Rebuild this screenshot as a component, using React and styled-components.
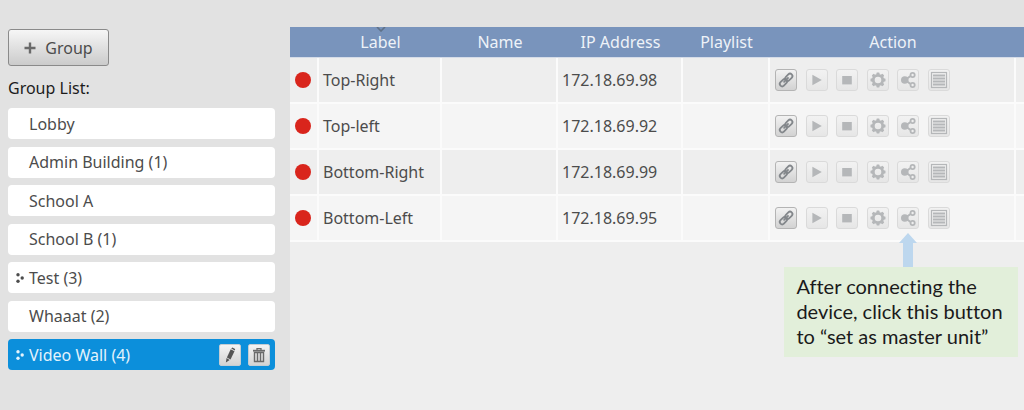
import styled, { createGlobalStyle } from "styled-components";

const groups = [
    { name: "Lobby" },
    { name: "Admin Building (1)" },
    { name: "School A" },
    { name: "School B (1)" },
    { name: "Test (3)", nested: true },
    { name: "Whaaat (2)" },
    { name: "Video Wall (4)", nested: true, selected: true },
];

const devices = [
    { label: "Top-Right", ip: "172.18.69.98" },
    { label: "Top-left", ip: "172.18.69.92" },
    { label: "Bottom-Right", ip: "172.18.69.99" },
    { label: "Bottom-Left", ip: "172.18.69.95", hint: true },
];

function PlusIcon(){
    return(
        <svg width="12" height="12" viewBox="0 0 12 12" aria-hidden="true">
            <path d="M6 .5v11M.5 6h11" stroke="#6a6a6a" strokeWidth="2.4"/>
        </svg>
    );
};

function DotsIcon(){
    return(
        <svg width="9" height="10" viewBox="0 0 9 10" fill="currentColor" aria-hidden="true">
            <circle cx="2" cy="1.8" r="1.7"/>
            <circle cx="6.2" cy="5" r="1.7"/>
            <circle cx="2" cy="8.2" r="1.7"/>
        </svg>
    );
};

function PencilIcon(){
    return(
        <svg width="20" height="20" viewBox="0 0 20 20" fill="#555" aria-hidden="true">
            <path d="M11.2 3.4l1.2-.9 2.7 1.5-.2 1.6z"/>
            <path d="M10.7 4.2l3.8 2.1-4 8.2-3.6-2.1z"/>
            <path d="M6.5 13.1l3.1 1.8-3.7 2.7z"/>
        </svg>
    );
};

function TrashIcon(){
    return(
        <svg width="20" height="20" viewBox="0 0 20 20" fill="none" stroke="#6a6a6a" aria-hidden="true">
            <path d="M4 5.7h12" strokeWidth="1.8"/>
            <path d="M8 5V3.6h4V5" strokeWidth="1.3"/>
            <path d="M5.5 7.5v9h9v-9z" strokeWidth="1.4"/>
            <path d="M8.5 7.5v9M11.5 7.5v9" strokeWidth="1.4"/>
        </svg>
    );
};

function LinkIcon(){
    return(
        <svg width="20" height="20" viewBox="0 0 20 20" fill="none" stroke="#83878b" strokeWidth="1.8" aria-hidden="true">
            <rect x="8.7" y="4.9" width="8.2" height="4.8" rx="2.4" transform="rotate(-45 12.8 7.3)"/>
            <rect x="3.3" y="10.3" width="8.2" height="4.8" rx="2.4" transform="rotate(-45 7.4 12.7)"/>
            <path d="M8.1 11.9l3.9-3.9" strokeLinecap="round"/>
        </svg>
    );
};

function PlayIcon(){
    return(
        <svg width="20" height="20" viewBox="0 0 20 20" fill="#b5b7b9" aria-hidden="true">
            <path d="M5.4 4.8l9.4 5.2-9.4 5.2z"/>
        </svg>
    );
};

function StopIcon(){
    return(
        <svg width="20" height="20" viewBox="0 0 20 20" fill="#b5b7b9" aria-hidden="true">
            <path d="M5.2 6h9.6v8.4H5.2z"/>
        </svg>
    );
};

function GearIcon(){
    const teeth = [0, 45, 90, 135, 180, 225, 270, 315];
    return(
        <svg width="20" height="20" viewBox="0 0 20 20" aria-hidden="true">
            <circle cx="10" cy="10" r="4.7" fill="none" stroke="#b5b7b9" strokeWidth="2.8"/>
            {teeth.map((angle) => (
                <path key={angle} d="M8.1 4.8l.7-2.3h2.4l.7 2.3z" fill="#b5b7b9" transform={`rotate(${angle} 10 10)`}/>
            ))}
        </svg>
    );
};

function ShareIcon(){
    return(
        <svg width="20" height="20" viewBox="0 0 20 20" fill="none" stroke="#b5b7b9" aria-hidden="true">
            <path d="M7 10l7-5M7 10l7 5" strokeWidth="2"/>
            <circle cx="6.8" cy="10" r="3.8" fill="#b5b7b9" stroke="none"/>
            <circle cx="14.6" cy="5" r="2.1" fill="#eee" strokeWidth="1.8"/>
            <circle cx="14.6" cy="15" r="2.1" fill="#eee" strokeWidth="1.8"/>
        </svg>
    );
};

function ListIcon(){
    return(
        <svg width="20" height="20" viewBox="0 0 20 20" fill="none" stroke="#b5b7b9" aria-hidden="true">
            <rect x="2.5" y="2.5" width="15" height="15" strokeWidth="1.2"/>
            <path d="M4 5.5h12M4 8.5h12M4 11.5h12M4 14.5h12" strokeWidth="1.8"/>
        </svg>
    );
};

function Actions({ hint }){
    return(
        <ActionBar>
            <IconButton aria-label="Connect"><LinkIcon/></IconButton>
            <IconButton $dim aria-label="Play"><PlayIcon/></IconButton>
            <IconButton $dim aria-label="Stop"><StopIcon/></IconButton>
            <IconButton $dim aria-label="Settings"><GearIcon/></IconButton>
            <HintAnchor>
                <IconButton $dim aria-label="Set as master unit"><ShareIcon/></IconButton>
                {hint && (
                    <Hint role="note">
                        <HintArrow width="18" height="34" viewBox="0 0 18 34" fill="#bdd7ee" aria-hidden="true">
                            <path d="M9 0l9 10h-4v24H4V10H0z"/>
                        </HintArrow>
                        <HintText>After connecting the device, click this button to “set as master unit”</HintText>
                    </Hint>
                )}
            </HintAnchor>
            <IconButton $dim aria-label="Details"><ListIcon/></IconButton>
        </ActionBar>
    );
};

export default function App(){
    return(
        <Page>
            <GlobalStyle/>
            <Sidebar>
                <GroupButton><PlusIcon/>Group</GroupButton>
                <ListTitle>Group List:</ListTitle>
                <GroupList>
                    {groups.map((group) => (
                        <GroupItem key={group.name} $selected={group.selected}>
                            <Marker>{group.nested && <DotsIcon/>}</Marker>
                            <GroupName>{group.name}</GroupName>
                            {group.selected && (
                                <Tools>
                                    <ToolButton aria-label="Edit group"><PencilIcon/></ToolButton>
                                    <ToolButton aria-label="Delete group"><TrashIcon/></ToolButton>
                                </Tools>
                            )}
                        </GroupItem>
                    ))}
                </GroupList>
            </Sidebar>
            <Main>
                <DeviceTable>
                    <colgroup>
                        <Col $width={29}/>
                        <Col $width={123}/>
                        <Col $width={116}/>
                        <Col $width={125}/>
                        <Col $width={87}/>
                        <Col $width={246}/>
                        <col/>
                    </colgroup>
                    <thead>
                        <tr>
                            <th/>
                            <th>
                                <SortMark width="10" height="5" viewBox="0 0 10 5" aria-hidden="true">
                                    <path d="M1 0l4 4 4-4" fill="none" stroke="#5f7188" strokeWidth="1.6"/>
                                </SortMark>
                                Label
                            </th>
                            <th>Name</th>
                            <th>IP Address</th>
                            <th>Playlist</th>
                            <th>Action</th>
                            <th/>
                        </tr>
                    </thead>
                    <tbody>
                        {devices.map((device) => (
                            <tr key={device.ip}>
                                <td><Status/></td>
                                <td>{device.label}</td>
                                <td/>
                                <td>{device.ip}</td>
                                <td/>
                                <td><Actions hint={device.hint}/></td>
                                <td/>
                            </tr>
                        ))}
                    </tbody>
                </DeviceTable>
            </Main>
        </Page>
    );
};

const GlobalStyle = createGlobalStyle`
* {
    box-sizing: border-box;
}
body {
    margin: 0;
    background-color: #e2e2e2;
    font-family: "Noto Sans", "Open Sans", sans-serif;
    font-size: 16px;
    line-height: 22px;
    color: #4c4c4c;
}
button {
    font: inherit;
    color: inherit;
    padding: 0;
}
`;

const Page = styled.div`
display: flex;
min-height: 100vh;
`;

const Sidebar = styled.aside`
flex: none;
width: 290px;
padding: 29px 15px 20px 8px;
`;

const GroupButton = styled.button`
display: flex;
align-items: center;
justify-content: center;
gap: 9px;
width: 101px;
height: 37px;
border: 1px solid #8a8a8a;
border-radius: 3px;
background: linear-gradient(#f6f6f6, #cbcbcb);
`;

const ListTitle = styled.h2`
margin: 11px 0 9px;
font-size: 16px;
font-weight: 400;
color: #1c1c1c;
`;

const GroupList = styled.ul`
display: flex;
flex-direction: column;
justify-content: space-between;
min-height: 262px;
margin: 0;
padding: 0;
list-style: none;
`;

const GroupItem = styled.li`
display: flex;
align-items: center;
height: 31px;
padding: 0 5px 0 8px;
border-radius: 4px;
background-color: ${(props) => (props.$selected ? "#0c8fdb" : "#ffffff")};
color: ${(props) => (props.$selected ? "#e4f3fc" : "#4c4c4c")};
`;

const Marker = styled.span`
display: flex;
width: 13px;
`;

const GroupName = styled.span`
flex: 1;
`;

const Tools = styled.div`
display: flex;
gap: 7px;
`;

const ToolButton = styled.button`
display: flex;
align-items: center;
justify-content: center;
width: 22px;
height: 22px;
border: 1px solid #c4cdd3;
border-radius: 2px;
background: linear-gradient(#f4f4f4, #d4d4d4);
`;

const Main = styled.main`
flex: 1;
min-width: 0;
margin-top: 27px;
background-color: #eeeeee;
`;

const DeviceTable = styled.table`
width: 100%;
table-layout: fixed;
border-collapse: separate;
border-spacing: 0;
th {
    position: relative;
    height: 31px;
    padding: 0;
    border-bottom: 1px solid #d5dce8;
    font-weight: 400;
    background-color: #7994bc;
    color: #eef2f8;
}
td {
    height: 46px;
    padding: 0 4px;
    border-right: 2px solid #fbfbfb;
    border-bottom: 2px solid #fbfbfb;
}
td:last-child {
    border-right: none;
}
td:nth-child(6) {
    padding-left: 5px;
}
tbody tr:nth-child(even) {
    background-color: #f5f5f5;
}
`;

const Col = styled.col`
width: ${(props) => props.$width}px;
`;

const SortMark = styled.svg`
position: absolute;
top: 0;
left: calc(50% - 5px);
`;

const Status = styled.span`
display: block;
width: 16px;
height: 16px;
margin-left: 1px;
border-radius: 50%;
background-color: #d9251c;
`;

const ActionBar = styled.div`
display: flex;
justify-content: space-between;
width: 175px;
`;

const IconButton = styled.button`
display: flex;
align-items: center;
justify-content: center;
width: 22px;
height: 22px;
border: 1px solid ${(props) => (props.$dim ? "#dadada" : "#b4b4b4")};
border-radius: 3px;
background: ${(props) => (props.$dim ? "linear-gradient(#f2f2f2, #e6e6e6)" : "linear-gradient(#f2f2f2, #d2d2d2)")};
`;

const HintAnchor = styled.div`
position: relative;
`;

const Hint = styled.div`
position: absolute;
top: 26px;
right: -99px;
width: 234px;
`;

const HintArrow = styled.svg`
display: block;
margin-left: 115px;
`;

const HintText = styled.p`
margin: 0;
padding: 7px 12px 8px;
background-color: #e2efda;
font-family: Lato, "Open Sans", sans-serif;
font-size: 20px;
font-variant-ligatures: none;
line-height: 25px;
color: #1a1a1a;
`;
